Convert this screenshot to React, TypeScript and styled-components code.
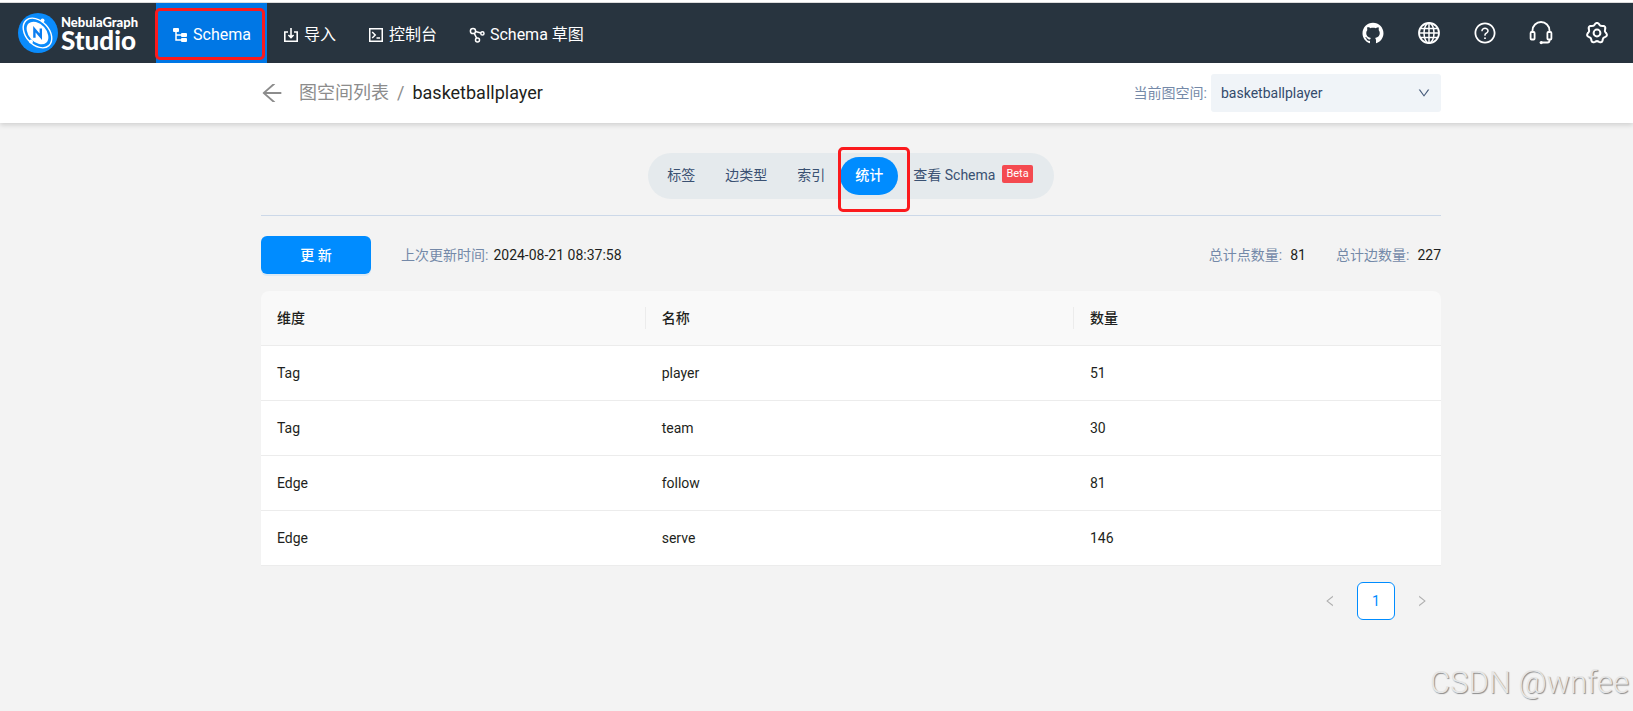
import React, { useState } from 'react';
import styled, { createGlobalStyle } from 'styled-components';
import {
  AiFillGithub,
  AiOutlineArrowLeft,
  AiOutlineDown,
  AiOutlineLeft,
  AiOutlineQuestionCircle,
  AiOutlineRight,
} from 'react-icons/ai';

const fontStack = "Roboto, 'Noto Sans CJK SC', sans-serif";

const GlobalStyle = createGlobalStyle`
  *, *::before, *::after { box-sizing: border-box; }
  body {
    margin: 0;
    background: #f3f3f3;
    color: #1e1f20;
    font-family: ${fontStack};
    font-size: 14px;
    line-height: 22px;
  }
  button, select { font: inherit; }
`;

const Page = styled.div`
  min-height: 100vh;
  position: relative;
`;

const TopBar = styled.header`
  display: flex;
  align-items: stretch;
  height: 63px;
  padding-right: 24px;
  border-top: 2px solid #fff;
  background: #28343f;
  box-shadow: inset 0 1px 0 #dcdcdc;
`;

const Logo = styled.a`
  display: flex;
  align-items: center;
  gap: 3px;
  width: 156px;
  padding-left: 18px;
  color: #fff;
  text-decoration: none;
`;

const LogoText = styled.span`
  display: flex;
  flex-direction: column;
  font-family: Lato, sans-serif;
  font-weight: 900;
`;

const LogoSmall = styled.span`
  font-size: 13px;
  line-height: 14px;
`;

const LogoLarge = styled.span`
  font-size: 26px;
  line-height: 22px;
`;

const MainNav = styled.nav`
  display: flex;
  padding-top: 1px;
`;

const NavLink = styled.a<{ $active?: boolean }>`
  position: relative;
  display: flex;
  align-items: center;
  gap: 5px;
  padding: 3px 16px 0;
  color: #fff;
  font-size: 16px;
  text-decoration: none;
  background: ${(p) => (p.$active ? '#0077e5' : 'transparent')};
`;

const Highlight = styled.span<{ $inset: string }>`
  position: absolute;
  inset: ${(p) => p.$inset};
  border: 3px solid #fb1a1d;
  border-radius: 5px;
  pointer-events: none;
`;

const Tools = styled.div`
  display: flex;
  align-items: center;
  gap: 32px;
  margin-left: auto;
`;

const ToolButton = styled.button`
  display: flex;
  padding: 0;
  border: 0;
  background: none;
  color: #fff;
  cursor: pointer;
`;

const SubHeader = styled.div`
  background: #fff;
  box-shadow: 0 2px 5px rgba(0, 0, 0, 0.15);
`;

const Container = styled.div`
  margin: 0 192px 0 261px;
`;

const SubHeaderRow = styled(Container)`
  display: flex;
  align-items: center;
  justify-content: space-between;
  height: 60px;
`;

const Breadcrumb = styled.nav`
  display: flex;
  align-items: center;
  gap: 8px;
  font-size: 18px;
`;

const Crumb = styled.a`
  display: flex;
  align-items: center;
  gap: 14px;
  margin-left: -2px;
  color: #8c8c8c;
  text-decoration: none;
`;

const Slash = styled.span`
  color: #8c8c8c;
`;

const SpacePicker = styled.div`
  display: flex;
  align-items: center;
  gap: 4px;
  color: #7489a8;
`;

const SelectBox = styled.div`
  position: relative;
  color: #465b7a;
`;

const Select = styled.select`
  appearance: none;
  width: 230px;
  height: 38px;
  padding: 0 30px 0 10px;
  border: 0;
  border-radius: 3px;
  background: #f0f4f8;
  color: #344b6c;
`;

const SelectArrow = styled(AiOutlineDown)`
  position: absolute;
  top: 12px;
  right: 10px;
  pointer-events: none;
`;

const TabArea = styled.div`
  display: flex;
  justify-content: center;
  padding: 30px 0 16px;
  border-bottom: 1px solid #ccd8e8;
`;

const TabGroup = styled.div`
  display: flex;
  padding: 4px;
  border-radius: 23px;
  background: #e5eaed;
`;

const Tab = styled.button<{ $active: boolean }>`
  position: relative;
  display: flex;
  align-items: center;
  gap: 7px;
  height: 38px;
  padding: 0 15px 2px;
  border: 0;
  border-radius: 19px;
  background: ${(p) => (p.$active ? '#008cff' : 'transparent')};
  color: ${(p) => (p.$active ? '#fff' : '#3a5172')};
  font-weight: ${(p) => (p.$active ? 500 : 400)};
  cursor: pointer;
`;

const Beta = styled.span`
  margin: 0 2px 2px 0;
  padding: 0 4px;
  border-radius: 2px;
  background: #f44a50;
  color: #fff;
  font-size: 11px;
  line-height: 18px;
`;

const Toolbar = styled.div`
  display: flex;
  align-items: center;
  gap: 30px;
  padding: 20px 0 17px;
`;

const UpdateButton = styled.button`
  width: 110px;
  height: 38px;
  border: 0;
  border-radius: 6px;
  background: #008cff;
  box-shadow: 0 2px 0 rgba(5, 145, 255, 0.1);
  color: #fff;
  font-weight: 500;
  cursor: pointer;
`;

const Stats = styled.div`
  display: flex;
  gap: 30px;
  margin-left: auto;
`;

const Stat = styled.div<{ $gap: number }>`
  display: flex;
  gap: ${(p) => p.$gap}px;
`;

const StatLabel = styled.span`
  color: #7489a8;
`;

const Table = styled.table`
  width: 100%;
  border-collapse: separate;
  border-spacing: 0;
  table-layout: fixed;
  text-align: left;
`;

const HeadCell = styled.th<{ $width: string }>`
  position: relative;
  width: ${(p) => p.$width};
  height: 55px;
  padding: 0 16px;
  border-bottom: 1px solid #ececec;
  background: #f9f9f9;
  font-weight: 500;

  &:first-child { border-top-left-radius: 8px; }
  &:last-child { border-top-right-radius: 8px; }
  &:not(:last-child)::after {
    content: '';
    position: absolute;
    top: 16px;
    right: 0;
    width: 1px;
    height: 22px;
    background: #ececec;
  }
`;

const Cell = styled.td`
  height: 55px;
  padding: 0 16px;
  border-bottom: 1px solid #ececec;
  background: #fff;
`;

const Pagination = styled.nav`
  display: flex;
  justify-content: flex-end;
  gap: 8px;
  margin-top: 16px;
`;

const PageButton = styled.button<{ $current?: boolean }>`
  display: flex;
  align-items: center;
  justify-content: center;
  width: 38px;
  height: 38px;
  padding: 0;
  border: 1px solid ${(p) => (p.$current ? '#008cff' : 'transparent')};
  border-radius: 6px;
  background: ${(p) => (p.$current ? '#fff' : 'transparent')};
  color: ${(p) => (p.$current ? '#008cff' : '#b0b0b0')};
`;

const Watermark = styled.div`
  position: absolute;
  right: 4px;
  bottom: 10px;
  color: #e6e6e6;
  font-family: Roboto, sans-serif;
  font-weight: 300;
  font-size: 31px;
  line-height: 36px;
  text-shadow: 1px 1px 1px #8a8a8a;
`;

const LogoMark = () => (
  <svg width="40" height="40" viewBox="0 0 40 40" fill="none" aria-hidden="true">
    <circle cx="20" cy="20" r="20" fill="#0a8bfb" />
    <ellipse cx="19.5" cy="20" rx="17" ry="11.6" transform="rotate(48 19.5 20)" stroke="#fff" strokeWidth="1.4" />
    <ellipse cx="19.5" cy="20" rx="13" ry="8.8" transform="rotate(48 19.5 20)" fill="#fff" />
    <circle cx="24.5" cy="7.5" r="2" fill="#fff" />
    <circle cx="13" cy="28.5" r="2" fill="#fff" />
    <path d="M16.4 24.8v-8.6l6.4 7.6v-8.2" stroke="#0a7df0" strokeWidth="2.4" />
  </svg>
);

const SchemaIcon = () => (
  <svg width="16" height="16" viewBox="0 0 16 16" fill="#fff" aria-hidden="true">
    <rect x="1" y="1" width="6" height="4" rx="1" />
    <rect x="9" y="6" width="6" height="4" rx="1" />
    <rect x="9" y="11" width="6" height="4" rx="1" />
    <path d="M4 4v9h6M4 8h6" fill="none" stroke="#fff" strokeWidth="1.5" />
  </svg>
);

const ImportIcon = () => (
  <svg width="16" height="16" viewBox="0 0 16 16" fill="none" stroke="#fff" strokeWidth="1.6" aria-hidden="true">
    <path d="M5 5H1.8v9.2h12.4V5H11M8 1v9M5.4 8L8 10.6 10.6 8" />
  </svg>
);

const ConsoleIcon = () => (
  <svg width="16" height="16" viewBox="0 0 16 16" fill="none" stroke="#fff" strokeWidth="1.5" aria-hidden="true">
    <rect x="1.75" y="1.75" width="12.5" height="12.5" />
    <path d="M4.2 5l3 3-3 3M8.5 11h3.5" />
  </svg>
);

const SketchIcon = () => (
  <svg width="16" height="16" viewBox="0 0 16 16" fill="none" stroke="#fff" strokeWidth="1.5" aria-hidden="true">
    <circle cx="4" cy="4" r="2.6" />
    <circle cx="13.4" cy="6.4" r="1.6" />
    <circle cx="8.5" cy="13" r="2" />
    <path d="M6.5 4.6l5.4 1.4M5.3 6.4l2.3 4.7" />
  </svg>
);

const GlobeIcon = () => (
  <svg width="24" height="24" viewBox="0 0 24 24" fill="none" stroke="#fff" strokeWidth="1.5" aria-hidden="true">
    <circle cx="12" cy="12" r="10" strokeWidth="1.8" />
    <ellipse cx="12" cy="12" rx="5" ry="10" />
    <path d="M12 2v20M2 12h20M4 7.6h16M4 16.4h16" />
  </svg>
);

const HeadsetIcon = () => (
  <svg width="24" height="24" viewBox="0 0 24 24" fill="none" stroke="#fff" strokeWidth="1.8" aria-hidden="true">
    <path d="M3.5 11V9.5a8.5 8.5 0 0 1 17 0V11M20.5 18v1.5a2 2 0 0 1-2 2H12" />
    <rect x="1.6" y="11" width="4" height="7.5" rx="1" />
    <rect x="18.4" y="11" width="4" height="7.5" rx="1" />
    <circle cx="12.2" cy="21.6" r="1.6" fill="#fff" stroke="none" />
  </svg>
);

// Outline of a gear with seven rounded teeth, the first one pointing up.
const gearOutline = Array.from({ length: 84 }, (_, i) => {
  const angle = (i / 84) * Math.PI * 2;
  const radius = 9.1 + Math.cos(angle * 7);
  const x = 12 + radius * Math.sin(angle);
  const y = 12 - radius * Math.cos(angle);
  return `${x.toFixed(2)},${y.toFixed(2)}`;
}).join(' ');

const GearIcon = () => (
  <svg width="24" height="24" viewBox="0 0 24 24" fill="none" stroke="#fff" strokeWidth="2" strokeLinejoin="round" aria-hidden="true">
    <polygon points={gearOutline} />
    <circle cx="12" cy="12" r="3.4" />
  </svg>
);

const tabs = ['标签', '边类型', '索引', '统计', '查看 Schema'];

const rows = [
  { kind: 'Tag', name: 'player', count: 51 },
  { kind: 'Tag', name: 'team', count: 30 },
  { kind: 'Edge', name: 'follow', count: 81 },
  { kind: 'Edge', name: 'serve', count: 146 },
];

export default function App() {
  const [activeTab, setActiveTab] = useState('统计');

  return (
    <Page>
      <GlobalStyle />
      <TopBar>
        <Logo href="#home">
          <LogoMark />
          <LogoText>
            <LogoSmall>NebulaGraph</LogoSmall>
            <LogoLarge>Studio</LogoLarge>
          </LogoText>
        </Logo>
        <MainNav>
          <NavLink href="#schema" $active>
            <SchemaIcon />
            Schema
            <Highlight $inset="5px 2px 3px -1px" />
          </NavLink>
          <NavLink href="#import"><ImportIcon />导入</NavLink>
          <NavLink href="#console"><ConsoleIcon />控制台</NavLink>
          <NavLink href="#sketch"><SketchIcon />Schema 草图</NavLink>
        </MainNav>
        <Tools>
          <ToolButton aria-label="GitHub"><AiFillGithub size={24} /></ToolButton>
          <ToolButton aria-label="语言"><GlobeIcon /></ToolButton>
          <ToolButton aria-label="帮助"><AiOutlineQuestionCircle size={24} /></ToolButton>
          <ToolButton aria-label="支持"><HeadsetIcon /></ToolButton>
          <ToolButton aria-label="设置"><GearIcon /></ToolButton>
        </Tools>
      </TopBar>

      <SubHeader>
        <SubHeaderRow>
          <Breadcrumb>
            <Crumb href="#spaces">
              <AiOutlineArrowLeft size={26} />
              图空间列表
            </Crumb>
            <Slash>/</Slash>
            <span>basketballplayer</span>
          </Breadcrumb>
          <SpacePicker>
            <label htmlFor="space">当前图空间:</label>
            <SelectBox>
              <Select id="space" defaultValue="basketballplayer">
                <option>basketballplayer</option>
              </Select>
              <SelectArrow size={14} />
            </SelectBox>
          </SpacePicker>
        </SubHeaderRow>
      </SubHeader>

      <Container as="main">
        <TabArea>
          <TabGroup role="tablist">
            {tabs.map((tab) => (
              <Tab
                key={tab}
                role="tab"
                aria-selected={tab === activeTab}
                $active={tab === activeTab}
                onClick={() => setActiveTab(tab)}
              >
                {tab}
                {tab === '查看 Schema' && <Beta>Beta</Beta>}
                {tab === '统计' && <Highlight $inset="-10px -12px -17px -2px" />}
              </Tab>
            ))}
          </TabGroup>
        </TabArea>

        <Toolbar>
          <UpdateButton>更 新</UpdateButton>
          <Stat $gap={5}>
            <StatLabel>上次更新时间:</StatLabel>
            <span>2024-08-21 08:37:58</span>
          </Stat>
          <Stats>
            <Stat $gap={8}>
              <StatLabel>总计点数量:</StatLabel>
              <span>81</span>
            </Stat>
            <Stat $gap={8}>
              <StatLabel>总计边数量:</StatLabel>
              <span>227</span>
            </Stat>
          </Stats>
        </Toolbar>

        <Table>
          <thead>
            <tr>
              <HeadCell $width="32.6%">维度</HeadCell>
              <HeadCell $width="36.3%">名称</HeadCell>
              <HeadCell $width="31.1%">数量</HeadCell>
            </tr>
          </thead>
          <tbody>
            {rows.map((row) => (
              <tr key={row.name}>
                <Cell>{row.kind}</Cell>
                <Cell>{row.name}</Cell>
                <Cell>{row.count}</Cell>
              </tr>
            ))}
          </tbody>
        </Table>

        <Pagination aria-label="分页">
          <PageButton aria-label="上一页" disabled><AiOutlineLeft size={14} /></PageButton>
          <PageButton $current>1</PageButton>
          <PageButton aria-label="下一页" disabled><AiOutlineRight size={14} /></PageButton>
        </Pagination>
      </Container>

      <Watermark>CSDN @wnfee</Watermark>
    </Page>
  );
}
